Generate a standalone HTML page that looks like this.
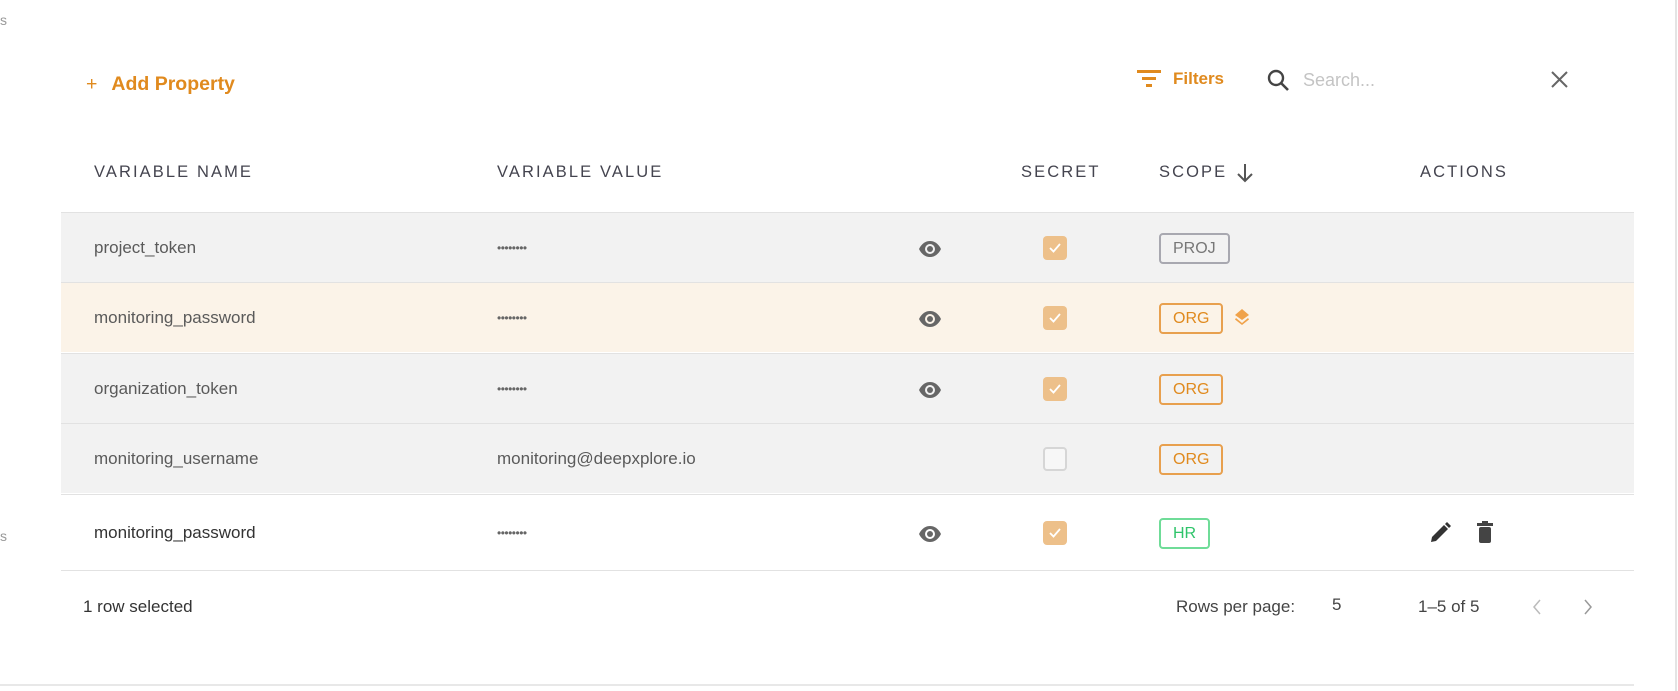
<!DOCTYPE html>
<html><head><meta charset="utf-8">
<style>
*{box-sizing:border-box;margin:0;padding:0}
body{width:1678px;height:691px;background:#fff;font-family:"Liberation Sans",sans-serif;position:relative;overflow:hidden;color:#555}
.a{position:absolute;white-space:nowrap}
.or{color:#e08a1e}
.hd{font-size:16.5px;letter-spacing:2.1px;color:#44444f;top:163px}
.row{position:absolute;left:61px;width:1573px;height:70px;border-top:1px solid #e2e2e2}
.cell{position:absolute;top:50%;transform:translateY(-50%);font-size:17px;color:#5a5a5a}
.dots{font-size:12px;letter-spacing:-0.5px;color:#666}
.cb{position:absolute;left:982px;top:23px;width:24px;height:24px;border-radius:4px;background:#edc08a}
.cb svg{position:absolute;left:5px;top:6px}
.cb.off{background:#f7f7f7;border:2px solid #d6d6d6}
.chip{position:absolute;left:1098px;top:20px;height:31px;border:2px solid #e8a04e;border-radius:4px;color:#e08a1e;font-size:16px;line-height:27px;padding:0 12px}
.eye{position:absolute;left:857px;top:24px}
</style></head><body>
<div class="a" style="left:0;top:12px;font-size:14px;color:#999">s</div>
<div class="a" style="left:0;top:528px;font-size:14px;color:#999">s</div>
<div class="a" style="left:1675px;top:0;width:2px;height:691px;background:#e4e4e4"></div>

<div class="a or" style="left:86px;top:73px;font-size:19.5px;font-weight:bold"><span style="font-weight:normal;margin-right:14px">+</span>Add Property</div>

<svg class="a" style="left:1137px;top:70px" width="24" height="18" viewBox="0 0 24 18"><rect x="0" y="0" width="24" height="3" fill="#e08a1e"/><rect x="5" y="7" width="14" height="3" fill="#e08a1e"/><rect x="9" y="14" width="6" height="3" fill="#e08a1e"/></svg>
<div class="a or" style="left:1173px;top:69px;font-size:17px;font-weight:bold">Filters</div>
<svg class="a" style="left:1266px;top:68px" width="24" height="24" viewBox="0 0 24 24"><circle cx="10" cy="10" r="7" fill="none" stroke="#444" stroke-width="2.4"/><line x1="15" y1="15" x2="22" y2="22" stroke="#444" stroke-width="2.6"/></svg>
<div class="a" style="left:1303px;top:70px;font-size:18px;color:#c4c4c4">Search...</div>
<svg class="a" style="left:1551px;top:71px" width="17" height="17" viewBox="0 0 17 17"><path d="M1 1L16 16M16 1L1 16" stroke="#666" stroke-width="2"/></svg>

<div class="a hd" style="left:94px">VARIABLE NAME</div>
<div class="a hd" style="left:497px">VARIABLE VALUE</div>
<div class="a hd" style="left:1021px">SECRET</div>
<div class="a hd" style="left:1159px">SCOPE</div>
<svg class="a" style="left:1236px;top:163px" width="18" height="20" viewBox="0 0 18 20"><path d="M9 1V18M2 11L9 18L16 11" fill="none" stroke="#555" stroke-width="2"/></svg>
<div class="a hd" style="left:1420px">ACTIONS</div>

<div class="row" style="top:212px;background:#f2f2f2">
<div class="cell" style="left:33px">project_token</div>
<div class="cell dots" style="left:436px">••••••••</div>
<svg class="eye" width="24" height="24" viewBox="0 0 24 24"><path d="M1 12C4 6 8 4 12 4S20 6 23 12C20 18 16 20 12 20S4 18 1 12Z" fill="#666"/><circle cx="12" cy="12" r="5" fill="#f2f2f2"/><circle cx="12" cy="12" r="3" fill="#666"/></svg>
<div class="cb"><svg width="14" height="12" viewBox="0 0 14 12"><path d="M2 6L5.5 9.5L12 2" stroke="#fff" stroke-width="1.8" fill="none"/></svg></div>
<div class="chip" style="border-color:#a8a8b0;color:#777">PROJ</div>
</div>
<div class="row" style="top:282px;background:#fbf3e8">
<div class="cell" style="left:33px">monitoring_password</div>
<div class="cell dots" style="left:436px">••••••••</div>
<svg class="eye" width="24" height="24" viewBox="0 0 24 24"><path d="M1 12C4 6 8 4 12 4S20 6 23 12C20 18 16 20 12 20S4 18 1 12Z" fill="#666"/><circle cx="12" cy="12" r="5" fill="#fbf3e8"/><circle cx="12" cy="12" r="3" fill="#666"/></svg>
<div class="cb"><svg width="14" height="12" viewBox="0 0 14 12"><path d="M2 6L5.5 9.5L12 2" stroke="#fff" stroke-width="1.8" fill="none"/></svg></div>
<div class="chip">ORG</div>
<svg class="a" style="left:1172px;top:25px" width="18" height="20" viewBox="0 0 18 20"><path d="M9 1L16 7L9 12L2 7Z" fill="#f0a24a"/><path d="M3 10L9 15L15 10L16 11.5L9 17L2 11.5Z" fill="#f0a24a"/></svg>
</div>
<div class="row" style="top:353px;background:#f2f2f2">
<div class="cell" style="left:33px">organization_token</div>
<div class="cell dots" style="left:436px">••••••••</div>
<svg class="eye" width="24" height="24" viewBox="0 0 24 24"><path d="M1 12C4 6 8 4 12 4S20 6 23 12C20 18 16 20 12 20S4 18 1 12Z" fill="#666"/><circle cx="12" cy="12" r="5" fill="#f2f2f2"/><circle cx="12" cy="12" r="3" fill="#666"/></svg>
<div class="cb"><svg width="14" height="12" viewBox="0 0 14 12"><path d="M2 6L5.5 9.5L12 2" stroke="#fff" stroke-width="1.8" fill="none"/></svg></div>
<div class="chip">ORG</div>
</div>
<div class="row" style="top:423px;background:#f2f2f2">
<div class="cell" style="left:33px">monitoring_username</div>
<div class="cell" style="left:436px">monitoring@deepxplore.io</div>
<div class="cb off"></div>
<div class="chip">ORG</div>
</div>
<div class="row" style="top:494px;height:77px;background:#fff;border-bottom:1px solid #e2e2e2">
<div class="cell" style="left:33px;color:#333">monitoring_password</div>
<div class="cell dots" style="left:436px">••••••••</div>
<svg class="eye" style="top:27px" width="24" height="24" viewBox="0 0 24 24"><path d="M1 12C4 6 8 4 12 4S20 6 23 12C20 18 16 20 12 20S4 18 1 12Z" fill="#666"/><circle cx="12" cy="12" r="5" fill="#fff"/><circle cx="12" cy="12" r="3" fill="#666"/></svg>
<div class="cb" style="top:26px"><svg width="14" height="12" viewBox="0 0 14 12"><path d="M2 6L5.5 9.5L12 2" stroke="#fff" stroke-width="1.8" fill="none"/></svg></div>
<div class="chip" style="top:23px;border-color:#6fdc98;color:#2ec46a">HR</div>
<svg class="a" style="left:1368px;top:27px" width="22" height="22" viewBox="0 0 22 22"><path d="M2 20L3 15L15 3L19 7L7 19Z" fill="#333"/><path d="M16 2L18 0L22 4L20 6Z" fill="#333"/></svg>
<svg class="a" style="left:1416px;top:26px" width="16" height="22" viewBox="0 0 16 22"><rect x="0" y="2" width="16" height="3" fill="#444"/><rect x="5" y="0" width="6" height="3" fill="#444"/><rect x="2" y="6" width="12" height="16" rx="2" fill="#444"/></svg>
</div>

<div class="a" style="left:83px;top:597px;font-size:17px;color:#333">1 row selected</div>
<div class="a" style="left:1176px;top:597px;font-size:17px;color:#444">Rows per page:</div>
<div class="a" style="left:1332px;top:595px;font-size:17px;color:#444">5</div>
<div class="a" style="left:1418px;top:597px;font-size:17px;color:#444">1–5 of 5</div>
<svg class="a" style="left:1531px;top:598px" width="12" height="18" viewBox="0 0 12 18"><path d="M9 2L3 9L9 16" fill="none" stroke="#bbb" stroke-width="1.5"/></svg>
<svg class="a" style="left:1582px;top:598px" width="12" height="18" viewBox="0 0 12 18"><path d="M3 2L9 9L3 16" fill="none" stroke="#999" stroke-width="1.5"/></svg>
<div class="a" style="left:0;top:684px;width:1634px;height:2px;background:#e8e8e8"></div>
</body></html>
